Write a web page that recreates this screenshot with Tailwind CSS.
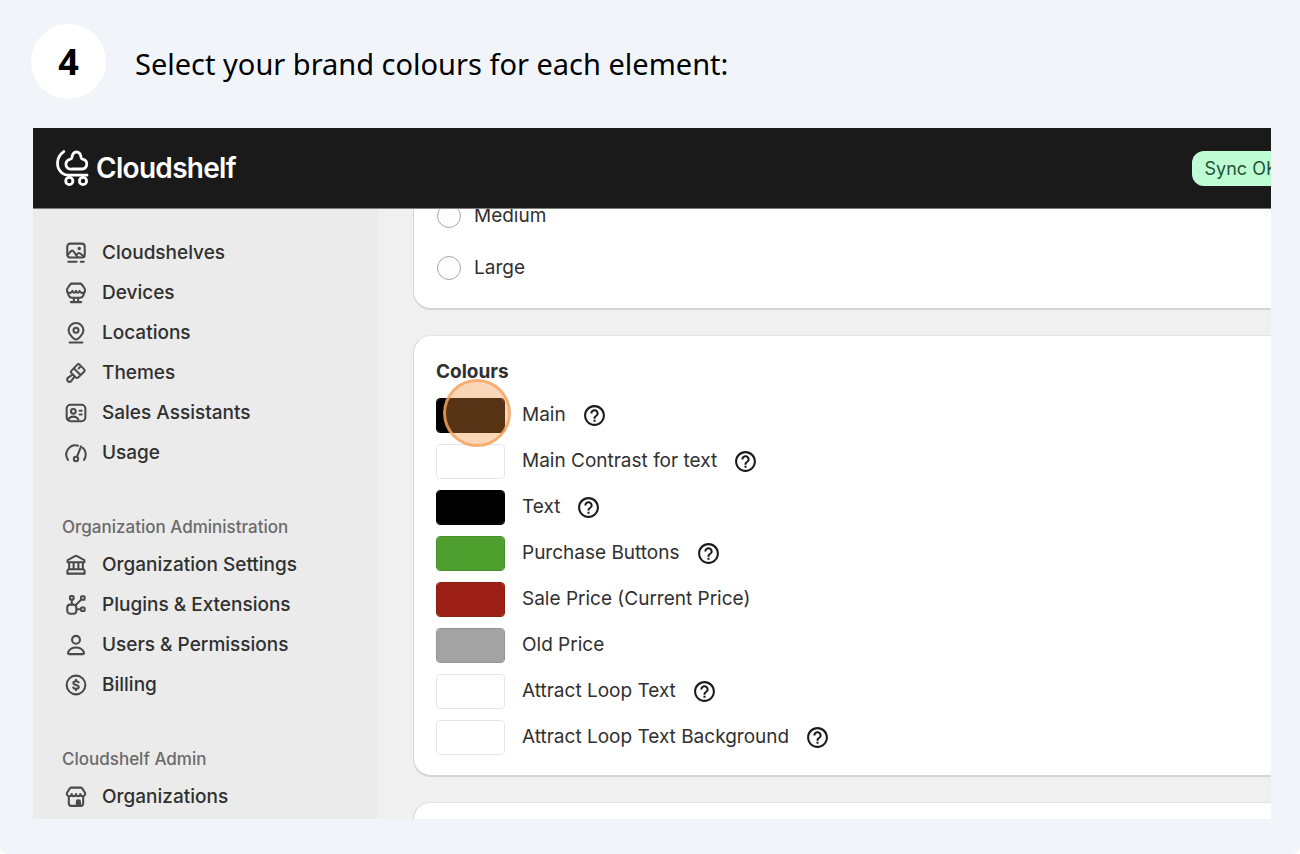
<!DOCTYPE html>
<html lang="en">
<head>
  <meta charset="UTF-8">
  <meta name="viewport" content="width=device-width, initial-scale=1.0">
  <title>Select your brand colours</title>
  <script src="https://cdn.jsdelivr.net/npm/@tailwindcss/browser@4"></script>
</head>
<body class="bg-white font-['Inter',sans-serif] text-[#303030]">
  <!-- Shared help icon -->
  <svg class="hidden" aria-hidden="true">
    <symbol id="help" viewBox="0 0 24 24">
      <path fill="currentColor" d="M11 18h2v-2h-2zm1-16C6.48 2 2 6.48 2 12s4.48 10 10 10 10-4.48 10-10S17.52 2 12 2m0 18c-4.41 0-8-3.59-8-8s3.59-8 8-8 8 3.59 8 8-3.59 8-8 8m0-14c-2.21 0-4 1.79-4 4h2c0-1.1.9-2 2-2s2 .9 2 2c0 2-3 1.75-3 5h2c0-2.25 3-2.5 3-5 0-2.21-1.79-4-4-4"/>
    </symbol>
  </svg>

  <div class="min-h-screen rounded-b-lg bg-[#f1f5fa] pt-6 pr-[29px] pb-[35px] pl-[33px]">
    <!-- Step heading -->
    <div class="-ml-0.5 mb-[29px] flex items-center gap-[29px] font-['Noto_Sans',sans-serif] text-black">
      <span class="flex size-[75px] shrink-0 items-center justify-center rounded-full bg-white text-4xl font-bold">4</span>
      <h1 class="pt-1 text-[29px] leading-10">Select your brand colours for each element:</h1>
    </div>

    <div class="overflow-hidden">
      <!-- Top bar -->
      <header class="flex h-[81px] items-center justify-between border-b border-[#7d7d7d] bg-[#1a1a1a] pl-[21px]">
        <a href="#" class="flex items-center gap-1.5 text-white">
          <svg class="h-10 w-9" viewBox="0 0 36 40" fill="none" stroke="currentColor" stroke-width="2.8" stroke-linecap="round" stroke-linejoin="round">
            <path d="M9.8 3.6C1.800 9.200 1.500 20.300 8.500 25.400c1.800 1.300 3.600 1.800 5.800 1.800H33"/>
            <path d="M17.800 21h10.200a4.900 4.900 0 0 0 1.200-9.600c-1.200-.3-1.900-.9-2.100-2C26.600 6 25 4 22.500 4s-4.100 2-4.600 5.400c-.2 1.100-.9 1.700-2.100 2A4.900 4.900 0 0 0 17.800 21z"/>
            <circle cx="15.300" cy="33" r="3.600"/>
            <circle cx="29" cy="33" r="3.600"/>
          </svg>
          <span class="text-[28px] leading-10 font-semibold tracking-tight">Cloudshelf</span>
        </a>
        <span class="-mr-[19px] rounded-xl bg-[#bffdd5] px-3 text-lg leading-[35px] whitespace-nowrap text-[#1f5237]">Sync OK</span>
      </header>

      <div class="flex overflow-hidden">
        <!-- Sidebar -->
        <nav class="w-[345px] shrink-0 bg-[#ebebeb] pt-6 pb-0.5 pl-[29px] text-[19px] font-medium">
          <ul class="pl-0.5">
            <li><a href="#" class="flex h-10 items-center gap-3.5">
              <svg class="size-6 text-[#4a4a4a]" viewBox="0 0 20 20" fill="none" stroke="currentColor" stroke-width="1.7" stroke-linecap="round" stroke-linejoin="round"><rect x="2.7" y="2.2" width="14.6" height="11.6" rx="2.5"/><path d="M3 11.500l3-3.200q.8-.8 1.600 0L11.500 13.500M10.300 11.500l1.500-1.300q.7-.5 1.400 0l3.700 2.800M3.500 17.3h7M14 17.300h2.500"/><circle cx="12.700" cy="6.300" r=".6" fill="currentColor"/></svg>
              Cloudshelves</a></li>
            <li><a href="#" class="flex h-10 items-center gap-3.5">
              <svg class="size-6 text-[#4a4a4a]" viewBox="0 0 20 20" fill="none" stroke="currentColor" stroke-width="1.7" stroke-linecap="round" stroke-linejoin="round"><path d="M6.600 2.200h6.800q1 0 1.600.8l2.300 3.500q.6 1 .1 2l-1.300 3.400q-.8 2-2.800 2H6.700q-2 0-2.800-2L2.600 8.500q-.5-1 .1-2L5 3q.6-.8 1.600-.8zM3.300 9.500c1.500 1 3 .2 3.700-1.300 1 2.200 2.200 2.200 3 0 .8 2.200 2 2.200 3 0 .7 1.500 2.200 2.300 3.700 1.300M8.200 14.200v3M11.800 14.200v3M5.700 17.600h8.600"/></svg>
              Devices</a></li>
            <li><a href="#" class="flex h-10 items-center gap-3.5">
              <svg class="size-6 text-[#4a4a4a]" viewBox="0 0 20 20" fill="none" stroke="currentColor" stroke-width="1.7" stroke-linecap="round" stroke-linejoin="round"><path d="M10 15.500c-1.200 0-6.200-4-6.200-7.800a6.200 6 0 0 1 12.400 0c0 3.800-5 7.800-6.200 7.800zM4.700 17.900h10.600"/><circle cx="10" cy="7.700" r="2.100"/></svg>
              Locations</a></li>
            <li><a href="#" class="flex h-10 items-center gap-3.5">
              <svg class="size-6 text-[#4a4a4a]" viewBox="0 0 20 20" fill="none" stroke="currentColor" stroke-width="1.7" stroke-linecap="round" stroke-linejoin="round"><path d="M6.100 8.200l5-5.200q.9-.8 1.800 0l4 4q.8.900 0 1.800l-5.200 5q-.9.800-1.800 0L6.100 10q-.8-.9 0-1.800zM8.300 6.200l5.500 5.500M14 4.200l-1.700 2M7 11.300l-3.800 2.700a1.900 1.900 0 1 0 2.800 2.800l2.700-3.800"/></svg>
              Themes</a></li>
            <li><a href="#" class="flex h-10 items-center gap-3.5">
              <svg class="size-6 text-[#4a4a4a]" viewBox="0 0 20 20" fill="none" stroke="currentColor" stroke-width="1.7" stroke-linecap="round" stroke-linejoin="round"><rect x="2.200" y="3.200" width="15.600" height="13.600" rx="3.300"/><circle cx="7.800" cy="8.600" r="2"/><path d="M3.600 15.500c1.700-3.300 6.700-3.300 8.400 0M13 8.200h1.700M13 11.200h1.700"/></svg>
              Sales Assistants</a></li>
            <li><a href="#" class="flex h-10 items-center gap-3.5">
              <svg class="size-6 text-[#4a4a4a]" viewBox="0 0 20 20" fill="none" stroke="currentColor" stroke-width="1.7" stroke-linecap="round" stroke-linejoin="round"><path d="M3.300 15.700A7.700 7.700 0 0 1 11.700 3.900M15.700 5.700a7.700 7.700 0 0 1 1 10M10.800 13.300l3.400-8.800"/><circle cx="10" cy="15" r="1.800"/></svg>
              Usage</a></li>
          </ul>

          <h2 class="mt-[42px] mb-1.5 text-[17px] leading-6 text-[#6a6a6a]">Organization Administration</h2>
          <ul class="pl-0.5">
            <li><a href="#" class="flex h-10 items-center gap-3.5">
              <svg class="size-6 text-[#4a4a4a]" viewBox="0 0 20 20" fill="none" stroke="currentColor" stroke-width="1.7" stroke-linecap="round" stroke-linejoin="round"><path d="M3 6l6.200-3.400q.8-.4 1.600 0L17 6v1.700H3zM4.300 8v5M8 8v5M12 8v5M15.700 8v5M3.600 13.500h12.800l.8 1.500v2.200H2.800V15z"/></svg>
              Organization Settings</a></li>
            <li><a href="#" class="flex h-10 items-center gap-3.5">
              <svg class="size-6 text-[#4a4a4a]" viewBox="0 0 20 20" fill="none" stroke="currentColor" stroke-width="1.7" stroke-linecap="round" stroke-linejoin="round"><rect x="2.700" y="9.700" width="7.600" height="7.600" rx="2.500"/><rect x="5" y="2.500" width="3" height="3" rx=".7"/><rect x="14.200" y="2.700" width="3" height="3" rx=".7"/><rect x="14.200" y="12" width="3" height="3" rx=".7"/><path d="M6.500 5.700v3.800M9.700 10.200l4.400-4.500M10.500 13.500H14"/></svg>
              Plugins &amp; Extensions</a></li>
            <li><a href="#" class="flex h-10 items-center gap-3.5">
              <svg class="size-6 text-[#4a4a4a]" viewBox="0 0 20 20" fill="none" stroke="currentColor" stroke-width="1.7" stroke-linecap="round" stroke-linejoin="round"><circle cx="10" cy="5.700" r="3.300"/><path d="M4.400 17.600h11.200q1.500-.2 1-1.600C14 10.700 6 10.700 3.400 16q-.5 1.400 1 1.600z"/></svg>
              Users &amp; Permissions</a></li>
            <li><a href="#" class="flex h-10 items-center gap-3.5">
              <svg class="size-6 text-[#4a4a4a]" viewBox="0 0 20 20" fill="none" stroke="currentColor" stroke-width="1.7" stroke-linecap="round" stroke-linejoin="round"><circle cx="10" cy="10" r="7.800"/><path d="M12.200 7.800c-.3-.7-1-1-2.200-1-1.300 0-2.200.5-2.200 1.500 0 2.300 4.500 1.100 4.500 3.400 0 1-.9 1.500-2.300 1.500-1.200 0-2-.4-2.300-1.100M10 5.700v1M10 13.300v1"/></svg>
              Billing</a></li>
          </ul>

          <h2 class="mt-[42px] mb-1.5 text-[17px] leading-6 text-[#6a6a6a]">Cloudshelf Admin</h2>
          <ul class="pl-0.5">
            <li><a href="#" class="flex h-10 items-center gap-3.5">
              <svg class="size-6 text-[#4a4a4a]" viewBox="0 0 20 20" fill="none" stroke="currentColor" stroke-width="1.7" stroke-linecap="round" stroke-linejoin="round"><path d="M6 2.200h8q.9 0 1.300.8l2.300 3.700c.4 1.300-.5 2.600-2 2.600-1.300 0-2-.8-2-1.800 0 1-.8 1.800-1.800 1.800S10 8.500 10 7.500c0 1-.8 1.800-1.800 1.800s-1.800-.8-1.800-1.800c0 1-.7 1.800-2 1.800-1.500 0-2.400-1.300-2-2.600L4.700 3q.4-.8 1.300-.8zM4 9.500v5.700q0 2.200 2.200 2.200h7.600q2.200 0 2.200-2.200V9.500"/><path d="M10.700 17v-3.300q0-1 1-1h.6q1 0 1 1V17z" fill="currentColor"/></svg>
              Organizations</a></li>
          </ul>
        </nav>

        <!-- Settings cards -->
        <main class="flex min-w-0 flex-1 flex-col gap-[25px] bg-[#f0f0f0] pl-[35px] text-[19px]">
          <section class="-mt-[19px] rounded-l-[18px] border-b-2 border-l border-[#d4d4d4] bg-white px-[23px] pb-3.5">
            <div class="flex h-[52px] items-center gap-[13px]">
              <input id="size-medium" type="radio" name="size" class="size-6 appearance-none rounded-full border border-[#a8a8a8] bg-[#fdfdfd]">
              <label for="size-medium">Medium</label>
            </div>
            <div class="flex h-[52px] items-center gap-[13px]">
              <input id="size-large" type="radio" name="size" class="size-6 appearance-none rounded-full border border-[#a8a8a8] bg-[#fdfdfd]">
              <label for="size-large">Large</label>
            </div>
          </section>

          <section class="rounded-l-[18px] border-t border-b-2 border-l border-t-[#e3e3e3] border-b-[#d4d4d4] border-l-[#d4d4d4] bg-white px-[22px] pt-6 pb-5">
            <h2 class="mb-3.5 leading-6 font-bold">Colours</h2>
            <div class="flex flex-col gap-[11px]">
              <div class="relative flex h-[35px] items-center">
                <input id="main" type="color" value="#000000" class="mr-[17px] h-full w-[69px] appearance-none overflow-hidden rounded border border-black p-0 [&::-webkit-color-swatch]:border-0 [&::-webkit-color-swatch-wrapper]:p-0">
                <label for="main">Main</label>
                <button type="button" aria-label="Help for main" class="ml-4"><svg class="size-[25px] text-[#1a1a1a]"><use href="#help"/></svg></button>
                <!-- Click marker -->
                <span class="absolute -top-[19px] left-[7px] size-[68px] rounded-full border-3 border-[#f5a55f]/80 bg-[#f08c3c]/36"></span>
              </div>
              <div class="flex h-[35px] items-center">
                <input id="contrast" type="color" value="#ffffff" class="mr-[17px] h-full w-[69px] appearance-none overflow-hidden rounded border border-black/10 p-0 [&::-webkit-color-swatch]:border-0 [&::-webkit-color-swatch-wrapper]:p-0">
                <label for="contrast">Main Contrast for text</label>
                <button type="button" aria-label="Help for main contrast" class="ml-4"><svg class="size-[25px] text-[#1a1a1a]"><use href="#help"/></svg></button>
              </div>
              <div class="flex h-[35px] items-center">
                <input id="text" type="color" value="#000000" class="mr-[17px] h-full w-[69px] appearance-none overflow-hidden rounded border border-black p-0 [&::-webkit-color-swatch]:border-0 [&::-webkit-color-swatch-wrapper]:p-0">
                <label for="text">Text</label>
                <button type="button" aria-label="Help for text" class="ml-4"><svg class="size-[25px] text-[#1a1a1a]"><use href="#help"/></svg></button>
              </div>
              <div class="flex h-[35px] items-center">
                <input id="purchase" type="color" value="#4f9f2f" class="mr-[17px] h-full w-[69px] appearance-none overflow-hidden rounded border border-[#478f2a] p-0 [&::-webkit-color-swatch]:border-0 [&::-webkit-color-swatch-wrapper]:p-0">
                <label for="purchase">Purchase Buttons</label>
                <button type="button" aria-label="Help for purchase buttons" class="ml-4"><svg class="size-[25px] text-[#1a1a1a]"><use href="#help"/></svg></button>
              </div>
              <div class="flex h-[35px] items-center">
                <input id="sale" type="color" value="#9c2015" class="mr-[17px] h-full w-[69px] appearance-none overflow-hidden rounded border border-[#8c1d13] p-0 [&::-webkit-color-swatch]:border-0 [&::-webkit-color-swatch-wrapper]:p-0">
                <label for="sale">Sale Price (Current Price)</label>
              </div>
              <div class="flex h-[35px] items-center">
                <input id="old" type="color" value="#a3a3a3" class="mr-[17px] h-full w-[69px] appearance-none overflow-hidden rounded border border-[#939393] p-0 [&::-webkit-color-swatch]:border-0 [&::-webkit-color-swatch-wrapper]:p-0">
                <label for="old">Old Price</label>
              </div>
              <div class="flex h-[35px] items-center">
                <input id="attract" type="color" value="#ffffff" class="mr-[17px] h-full w-[69px] appearance-none overflow-hidden rounded border border-black/10 p-0 [&::-webkit-color-swatch]:border-0 [&::-webkit-color-swatch-wrapper]:p-0">
                <label for="attract">Attract Loop Text</label>
                <button type="button" aria-label="Help for attract loop text" class="ml-4"><svg class="size-[25px] text-[#1a1a1a]"><use href="#help"/></svg></button>
              </div>
              <div class="flex h-[35px] items-center">
                <input id="attract-bg" type="color" value="#ffffff" class="mr-[17px] h-full w-[69px] appearance-none overflow-hidden rounded border border-black/10 p-0 [&::-webkit-color-swatch]:border-0 [&::-webkit-color-swatch-wrapper]:p-0">
                <label for="attract-bg">Attract Loop Text Background</label>
                <button type="button" aria-label="Help for attract loop text background" class="ml-4"><svg class="size-[25px] text-[#1a1a1a]"><use href="#help"/></svg></button>
              </div>
            </div>
          </section>

          <section class="flex-1 rounded-tl-[18px] border-t border-l border-t-[#e3e3e3] border-l-[#d4d4d4] bg-white"></section>
        </main>
      </div>
    </div>
  </div>
</body>
</html>
